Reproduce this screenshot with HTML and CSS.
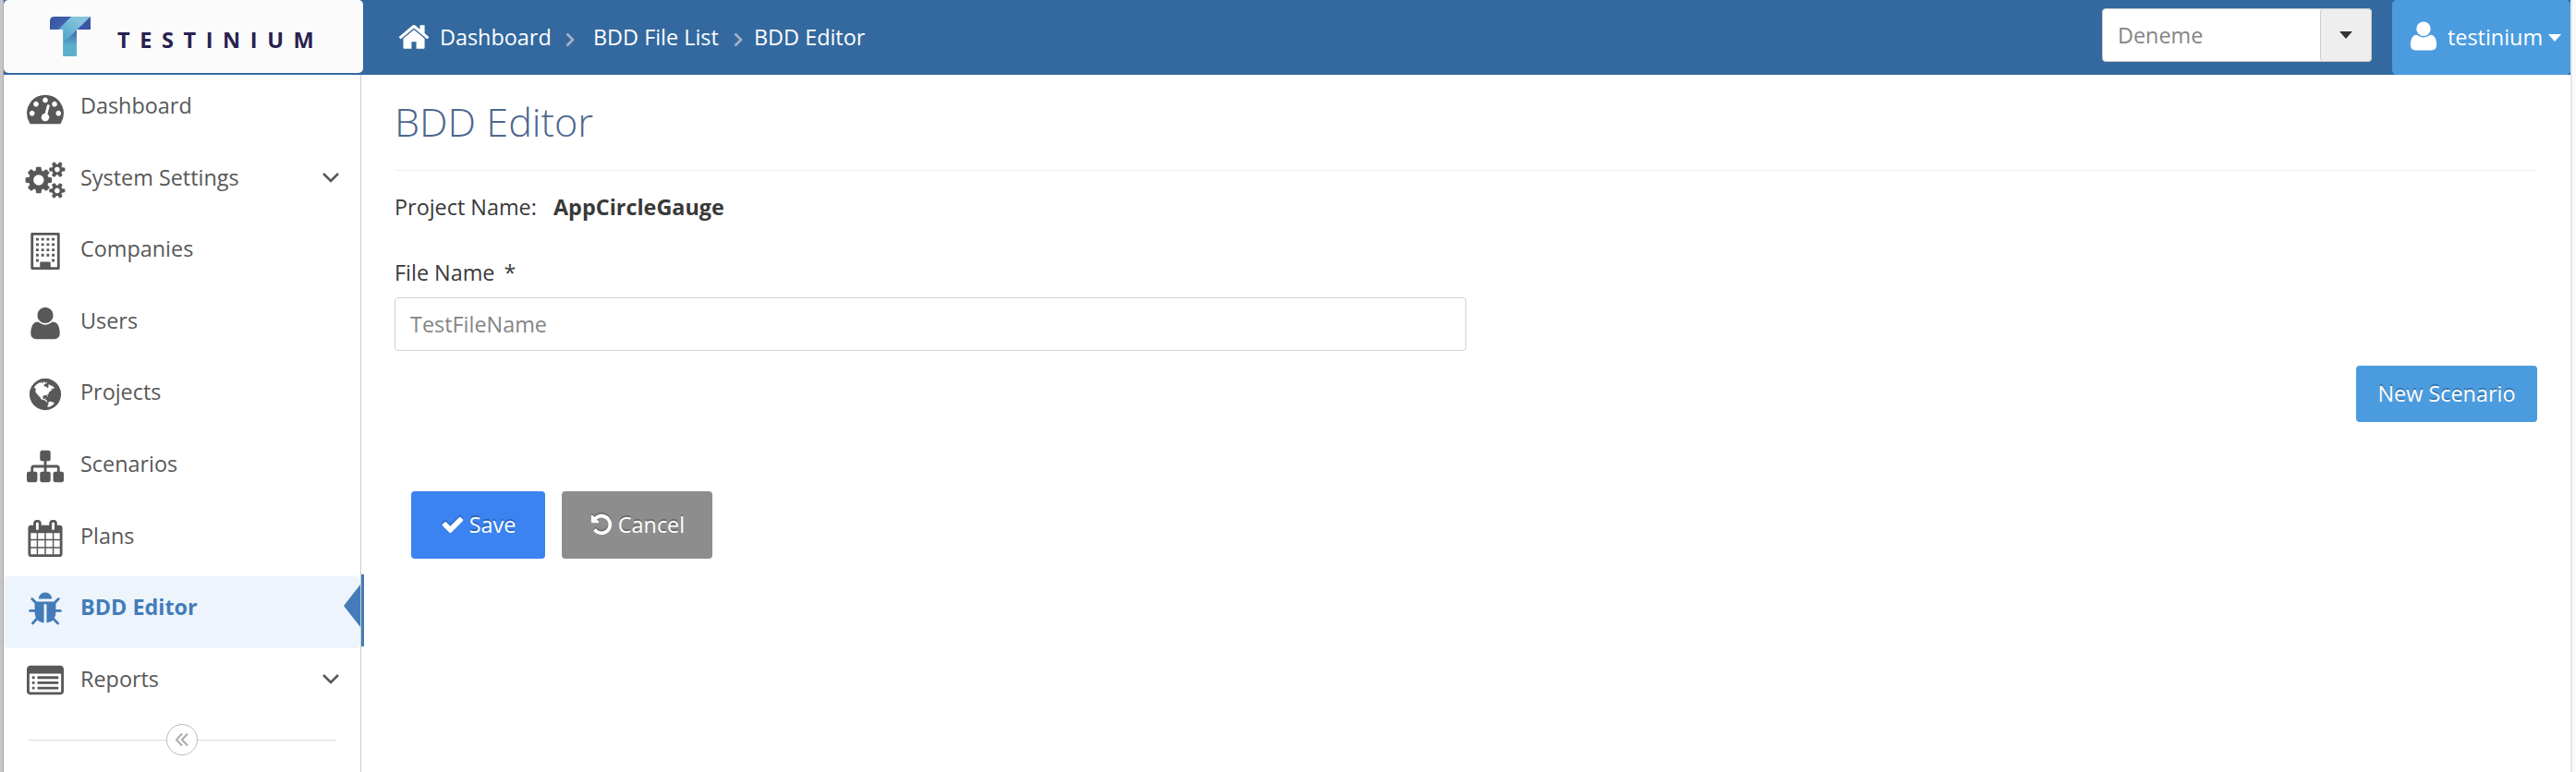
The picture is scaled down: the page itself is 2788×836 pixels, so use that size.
FILE: index.html
```html
<!DOCTYPE html>
<html lang="en">
<head>
<meta charset="utf-8">
<title>BDD Editor</title>
<link rel="stylesheet" href="styles.css">
</head>
<body>
<svg class="sprite" width="0" height="0" aria-hidden="true">
  <symbol id="i-dashboard" viewBox="0 0 1792 1792"><path d="M384 1152q0-53-37.5-90.5t-90.5-37.5-90.5 37.5-37.5 90.5 37.5 90.5 90.5 37.5 90.5-37.5 37.5-90.5zm192-448q0-53-37.5-90.5t-90.5-37.5-90.5 37.5-37.5 90.5 37.5 90.5 90.5 37.5 90.5-37.5 37.5-90.5zm428 481l101-382q6-26-7.5-48.5t-38.5-29.5-48 6.5-30 39.5l-101 382q-60 5-107 43.5t-63 98.5q-20 77 20 146t117 89 146-20 89-117q16-60-6-117t-72-91zm660-33q0-53-37.5-90.5t-90.5-37.5-90.5 37.5-37.5 90.5 37.5 90.5 90.5 37.5 90.5-37.5 37.5-90.5zm-640-640q0-53-37.5-90.5t-90.5-37.5-90.5 37.5-37.5 90.5 37.5 90.5 90.5 37.5 90.5-37.5 37.5-90.5zm448 192q0-53-37.5-90.5t-90.5-37.5-90.5 37.5-37.5 90.5 37.5 90.5 90.5 37.5 90.5-37.5 37.5-90.5zm320 448q0 261-141 483-19 29-54 29h-1402q-35 0-54-29-141-221-141-483 0-182 71-348t191-286 286-191 348-71 348 71 286 191 191 286 71 348z"/></symbol>
  <symbol id="i-cogs" viewBox="0 0 1792 1792" overflow="visible"><path d="M832 896q0-106-75-181t-181-75-181 75-75 181 75 181 181 75 181-75 75-181zm768 512q0-52-38-90t-90-38-90 38-38 90q0 53 37.5 90.5t90.5 37.5 90.5-37.5 37.5-90.5zm0-1024q0-52-38-90t-90-38-90 38-38 90q0 53 37.5 90.5t90.5 37.5 90.5-37.5 37.5-90.5zm-384 421v185q0 10-7 19.5t-16 10.5l-155 24q-11 35-32 76 34 48 90 115 7 11 7 20 0 12-7 19-23 30-82.5 89.5t-78.5 59.5q-11 0-21-7l-115-90q-37 19-77 31-11 108-23 155-7 24-30 24h-186q-11 0-20-7.5t-10-17.5l-23-153q-34-10-75-31l-118 89q-7 7-20 7-11 0-21-8-144-133-144-160 0-9 7-19 10-14 41-53t47-61q-23-44-35-82l-152-24q-10-1-17-9.5t-7-19.5v-185q0-10 7-19.5t16-10.5l155-24q11-35 32-76-34-48-90-115-7-11-7-20 0-12 7-20 22-30 82-89t79-59q11 0 21 7l115 90q34-18 77-32 11-108 23-154 7-24 30-24h186q11 0 20 7.5t10 17.5l23 153q34 10 75 31l118-89q8-7 20-7 11 0 21 8 144 133 144 160 0 8-7 19-12 16-42 54t-45 60q23 48 34 82l152 23q10 2 17 10.5t7 19.5zm640 533v140q0 16-149 31-12 27-30 52 51 113 51 138 0 4-4 7-122 71-124 71-8 0-46-47t-52-68q-20 2-30 2t-30-2q-14 21-52 68t-46 47q-2 0-124-71-4-3-4-7 0-25 51-138-18-25-30-52-149-15-149-31v-140q0-16 149-31 13-29 30-52-51-113-51-138 0-4 4-7 4-2 35-20t59-34 30-16q8 0 46 46.5t52 67.5q20-2 30-2t30 2q51-71 92-112l6-2q4 0 124 70 4 3 4 7 0 25-51 138 17 23 30 52 149 15 149 31zm0-1024v140q0 16-149 31-12 27-30 52 51 113 51 138 0 4-4 7-122 71-124 71-8 0-46-47t-52-68q-20 2-30 2t-30-2q-14 21-52 68t-46 47q-2 0-124-71-4-3-4-7 0-25 51-138-18-25-30-52-149-15-149-31v-140q0-16 149-31 13-29 30-52-51-113-51-138 0-4 4-7 4-2 35-20t59-34 30-16q8 0 46 46.5t52 67.5q20-2 30-2t30 2q51-71 92-112l6-2q4 0 124 70 4 3 4 7 0 25-51 138 17 23 30 52 149 15 149 31z"/></symbol>
  <symbol id="i-building" viewBox="0 0 1792 1792">
    <path fill-rule="evenodd" d="M256 0h1280q64 0 64 64v1664q0 64-64 64h-1280q-64 0-64-64v-1664q0-64 64-64zM320 128v1536h320v-224q0-32 32-32h448q32 0 32 32v224h320v-1536z"/>
    <path d="M448 256h128v128h-128zm256 0h128v128h-128zm256 0h128v128h-128zm256 0h128v128h-128zM448 512h128v128h-128zm256 0h128v128h-128zm256 0h128v128h-128zm256 0h128v128h-128zM448 768h128v128h-128zm256 0h128v128h-128zm256 0h128v128h-128zm256 0h128v128h-128zM448 1024h128v128h-128zm256 0h128v128h-128zm256 0h128v128h-128zm256 0h128v128h-128zM448 1280h128v128h-128zm768 0h128v128h-128z"/>
  </symbol>
  <symbol id="i-user" viewBox="0 0 1792 1792"><path d="M1600 1405q0 120-73 189.5t-194 69.5h-874q-121 0-194-69.5t-73-189.5q0-53 3.5-103.5t14-109 26.5-108.5 43-97.5 62-81 85.5-53.5 111.5-20q9 0 42 21.5t74.5 48 108 48 133.5 21.5 133.5-21.5 108-48 74.5-48 42-21.5q61 0 111.5 20t85.5 53.5 62 81 43 97.5 26.5 108.5 14 109 3.5 103.5zm-320-893q0 159-112.5 271.5t-271.5 112.5-271.5-112.5-112.5-271.5 112.5-271.5 271.5-112.5 271.5 112.5 112.5 271.5z"/></symbol>
  <symbol id="i-globe" viewBox="0 0 1792 1792"><path d="M896 128q209 0 385.5 103t279.5 279.5 103 385.5-103 385.5-279.5 279.5-385.5 103-385.5-103-279.5-279.5-103-385.5 103-385.5 279.5-279.5 385.5-103zm274 521q-2 1-9.5 9.5t-13.5 9.5q2 0 4.5-5t5-11 3.5-7q6-7 22-15 14-6 52-12 34-8 51 11-2-2 9.5-13t14.5-12q3-2 15-4.5t15-7.5l2-22q-12 1-17.5-7t-6.5-21q0 2-6 8 0-7-4.5-8t-11.5 1-9 1q-10-3-15-7.5t-8-16.5-4-15q-2-5-9.5-11t-9.5-10q-1-2-2.5-5.5t-3-6.5-4-5.5-5.5-2.5-7 5-7.5 10-4.5 5q-3-2-6-1.5t-4.5 1-4.5 3-5 3.5q-3 2-8.5 3t-8.5 2q15-5-1-11-10-4-16-3 9-4 7.5-12t-8.5-14h5q-1-4-8.5-8.5t-17.5-8.5-13-6q-8-5-34-9.5t-33-.5q-5 6-4.5 10.5t4 14 3.5 12.5q1 6-5.5 13t-6.5 12q0 7 14 15.5t10 21.5q-3 8-16 16t-16 12q-5 8-1.5 18.5t10.5 16.5q2 2 1.5 4t-3.5 4.5-5.5 4-6.5 3.5l-3 2q-11 5-20.5-6t-13.5-26q-7-25-16-30-23-8-29 1-5-13-41-26-25-9-58-4 6-1 0-15-7-15-19-12 3-6 4-17.5t1-13.5q3-13 12-23 1-1 7-8.5t9.5-13.5.5-6q35 4 50-11 5-5 11.5-17t10.5-17q9-6 14-5.5t14.5 5.5 14.5 5q14 1 15.5-11t-7.5-20q12 1 3-17-5-7-8-9-12-4-27 5-8 4 2 8-1-1-9.5 10.5t-16.5 17.5-16-5q-1-1-5.5-13.5t-9.5-13.5q-8 0-16 15 3-8-11-15t-24-8q19-12-8-27-7-4-20.5-5t-19.5 4q-5 7-5.5 11.5t5 8 10.5 5.5 11.5 4 8.5 3q14 10 8 14-2 1-8.5 3.5t-11.5 4.5-6 4q-3 4 0 14t-2 14q-5-5-9-17.5t-7-16.5q7 9-25 6l-10-1q-4 0-16 2t-20.5 1-13.5-8q-4-8 0-20 1-4 4-2-4-3-11-9.5t-10-8.5q-46 15-94 41 6 1 12-1 5-2 13-6.5t10-5.5q34-14 42-7l5-5q14 16 20 25-7-4-30-1-20 6-22 12 7 12 5 18-4-3-11.5-10t-14.5-11-15-5q-16 0-22 1-146 80-235 222 7 7 12 8 4 1 5 9t2.5 11 11.5-3q9 8 3 19 1-1 44 27 19 17 21 21 3 11-10 18-1-2-9-9t-9-4q-3 5 .5 18.5t10.5 12.5q-7 0-9.5 16t-2.5 35.5-1 23.5l2 1q-3 12 5.5 34.5t21.5 19.5q-13 3 20 43 6 8 8 9 3 2 12 7.5t15 10 10 10.5q4 5 10 22.5t14 23.5q-2 6 9.5 20t10.5 23q-1 0-2.5 1t-2.5 1q3 7 15.5 14t15.5 13q1 3 2 10t3 11 8 2q2-20-24-62-15-25-17-29-3-5-5.5-15.5t-4.5-14.5q2 0 6 1.5t8.5 3.5 7.5 4 2 3q-3 7 2 17.5t12 18.5 17 19 12 13q6 6 14 19.5t0 13.5q9 0 20 10.5t17 19.5q5 8 8 26t5 24q2 7 8.5 13.5t12.5 9.5l16 8 13 7q5 2 18.5 10.5t21.5 11.5q10 4 16 4t14.5-2.5 13.5-3.5q15-2 29 15t21 21q36 19 55 11-2 1 .5 7.5t8 15.5 9 14.5 5.5 8.5q5 6 18 15t18 15q6-4 7-9-3 8 7 20t18 10q14-3 14-32-31 15-49-18 0-1-2.5-5.5t-4-8.5-2.5-8.5 0-7.5 5-3q9 0 10-3.5t-2-12.5-4-13q-1-8-11-20t-12-15q-5 9-16 8t-16-9q0 1-1.5 5.5t-1.5 6.5q-13 0-15-1 1-3 2.5-17.5t3.5-22.5q1-4 5.5-12t7.5-14.5 4-12.5-4.5-9.5-17.5-2.5q-19 1-26 20-1 3-3 10.5t-5 11.5-9 7q-7 3-24 2t-24-5q-13-8-22.5-29t-9.5-37q0-10 2.5-26.5t3-25-5.5-24.5q3-2 9-9.5t10-10.5q2-1 4.5-1.5t4.5 0 4-1.5 3-6q-1-1-4-3-3-3-4-3 7 3 28.5-1.5t27.5 1.5q15 11 22-2 0-1-2.5-9.5t-.5-13.5q5 27 29 9 3 3 15.5 5t17.5 5q3 2 7 5.5t5.5 4.5 5-.5 8.5-6.5q10 14 12 24 11 40 19 44 7 3 11 2t4.5-9.5 0-14-1.5-12.5l-1-8v-18l-1-8q-15-3-18.5-12t1.5-18.5 15-18.5q1-1 8-3.5t15.5-6.5 12.5-8q21-19 15-35 7 0 11-9-1 0-5-3t-7.5-5-4.5-2q9-5 2-16 5-3 7.5-11t7.5-10q9 12 21 2 8-8 1-16 5-7 20.5-10.5t18.5-9.5q7 2 8-2t1-12 3-12q4-5 15-9t13-5l17-11q3-4 0-4 18 2 31-11 10-11-6-20 3-6-3-9.5t-15-5.5q3-1 11.5-.5t10.5-1.5q15-10-7-16-17-5-43 12zm-163 877q206-36 351-189-3-3-12.5-4.5t-12.5-3.5q-18-7-24-8 1-7-2.5-13t-8-9-12.5-8-11-7q-2-2-7-6t-7-5.5-7.5-4.5-8.5-2-10 1l-3 1q-3 1-5.5 2.5t-5.5 3-4 3 0 2.5q-21-17-36-22-5-1-11-5.5t-10.5-7-10-1.5-11.5 7q-5 5-6 15t-2 13q-7-5 0-17.5t2-18.5q-3-6-10.5-4.5t-12 4.5-11.5 8.5-9 6.5-8.5 5.5-8.5 7.5q-3 4-6 12t-5 11q-2-4-11.5-6.5t-9.5-5.5q2 10 4 35t5 38q7 31-12 48-27 25-29 40-4 22 12 26 0 7-8 20.5t-7 21.5q0 6 2 16z"/></symbol>
  <symbol id="i-sitemap" viewBox="0 0 1792 1792"><path d="M1792 1248v320q0 40-28 68t-68 28h-320q-40 0-68-28t-28-68v-320q0-40 28-68t68-28h96v-192h-512v192h96q40 0 68 28t28 68v320q0 40-28 68t-68 28h-320q-40 0-68-28t-28-68v-320q0-40 28-68t68-28h96v-192h-512v192h96q40 0 68 28t28 68v320q0 40-28 68t-68 28h-320q-40 0-68-28t-28-68v-320q0-40 28-68t68-28h96v-192q0-52 38-90t90-38h512v-192h-96q-40 0-68-28t-28-68v-320q0-40 28-68t68-28h320q40 0 68 28t28 68v320q0 40-28 68t-68 28h-96v192h512q52 0 90 38t38 90v192h96q40 0 68 28t28 68z"/></symbol>
  <symbol id="i-calendar" viewBox="0 0 1792 1792"><path d="M192 1664h288v-288h-288v288zm352 0h320v-288h-320v288zm-352-352h288v-320h-288v320zm352 0h320v-320h-320v320zm-352-384h288v-288h-288v288zm736 736h320v-288h-320v288zm-384-736h320v-288h-320v288zm768 736h288v-288h-288v288zm-384-352h320v-320h-320v320zm-352-864v-288q0-13-9.500-22.500t-22.500-9.500h-64q-13 0-22.500 9.500t-9.500 22.500v288q0 13 9.500 22.500t22.500 9.500h64q13 0 22.500-9.500t9.500-22.500zm736 864h288v-320h-288v320zm-384-384h320v-288h-320v288zm384 0h288v-288h-288v288zm32-480v-288q0-13-9.500-22.500t-22.500-9.500h-64q-13 0-22.500 9.500t-9.500 22.500v288q0 13 9.500 22.500t22.500 9.500h64q13 0 22.500-9.500t9.500-22.500zm384-64v1280q0 52-38 90t-90 38h-1408q-52 0-90-38t-38-90v-1280q0-52 38-90t90-38h128v-96q0-66 47-113t113-47h64q66 0 113 47t47 113v96h384v-96q0-66 47-113t113-47h64q66 0 113 47t47 113v96h128q52 0 90 38t38 90z"/></symbol>
  <symbol id="i-bug" viewBox="0 0 1792 1792"><path d="M1696 960q0 26-19 45t-45 19h-224q0 171-67 290l208 209q19 19 19 45t-19 45q-18 19-45 19t-45-19l-198-197q-5 5-15 13t-42 28.500-65 36.500-82 29-97 13v-896h-128v896q-51 0-101.500-13.500t-87-33-66-39-43.500-32.500l-15-14-183 207q-20 21-48 21-24 0-43-16-19-18-20.500-44.500t15.500-46.500l202-227q-58-114-58-274h-224q-26 0-45-19t-19-45 19-45 45-19h224v-294l-173-173q-19-19-19-45t19-45 45-19 45 19l173 173h844l173-173q19-19 45-19t45 19 19 45-19 45l-173 173v294h224q26 0 45 19t19 45zm-480-576h-640q0-133 93.500-226.500t226.500-93.500 226.500 93.500 93.500 226.500z"/></symbol>
  <symbol id="i-list" viewBox="0 0 1792 1792">
    <path fill-rule="evenodd" d="M160 128h1472q66 0 113 47t47 113v1088q0 66-47 113t-113 47h-1472q-66 0-113-47t-47-113v-1088q0-66 47-113t113-47zM160 512q-32 0-32 32v832q0 32 32 32h1472q32 0 32-32v-832q0-32-32-32z"/>
    <path d="M288 640h64q32 0 32 32v64q0 32-32 32h-64q-32 0-32-32v-64q0-32 32-32zm0 256h64q32 0 32 32v64q0 32-32 32h-64q-32 0-32-32v-64q0-32 32-32zm0 256h64q32 0 32 32v64q0 32-32 32h-64q-32 0-32-32v-64q0-32 32-32zM544 640h960q32 0 32 32v64q0 32-32 32h-960q-32 0-32-32v-64q0-32 32-32zm0 256h960q32 0 32 32v64q0 32-32 32h-960q-32 0-32-32v-64q0-32 32-32zm0 256h960q32 0 32 32v64q0 32-32 32h-960q-32 0-32-32v-64q0-32 32-32z"/>
  </symbol>
  <symbol id="i-home" viewBox="0 0 1792 1792"><path d="M1472 992v480q0 26-19 45t-45 19h-384v-384h-256v384h-384q-26 0-45-19t-19-45v-480q0-1 .5-3t.5-3l575-474 575 474q1 2 1 6zm223-69l-62 74q-8 9-21 11h-3q-13 0-21-7l-692-577-692 577q-12 8-24 7-13-2-21-11l-62-74q-8-10-7-23.500t11-21.500l719-599q32-26 76-26t76 26l244 204v-195q0-14 9-23t23-9h192q14 0 23 9t9 23v408l219 182q10 8 11 21.500t-7 23.500z"/></symbol>
  <symbol id="i-check" viewBox="0 0 1792 1792"><path d="M1671 566q0 40-28 68l-724 724-136 136q-28 28-68 28t-68-28l-136-136-362-362q-28-28-28-68t28-68l136-136q28-28 68-28t68 28l294 295 656-657q28-28 68-28t68 28l136 136q28 28 28 68z"/></symbol>
  <symbol id="i-undo" viewBox="0 0 1792 1792"><path d="M1664 896q0 156-61 298t-164 245-245 164-298 61q-172 0-327-72.500t-264-204.500q-7-10-6.500-22.500t8.500-20.500l137-138q10-9 25-9 16 2 23 12 73 95 179 147t225 52q104 0 198.500-40.500t163.500-109.500 109.500-163.500 40.500-198.500-40.500-198.500-109.500-163.500-163.500-109.500-198.500-40.500q-98 0-188 35.500t-160 101.500l137 138q31 30 14 69-17 40-59 40h-448q-26 0-45-19t-19-45v-448q0-42 40-59 39-17 69 14l130 129q107-101 244.500-156.500t284.500-55.500q156 0 298 61t245 164 164 245 61 298z"/></symbol>
</svg>

<div class="app">
  <header class="topbar">
    <a class="brand">
      <svg class="brand-mark" viewBox="0 0 44 43">
        <defs>
          <clipPath id="tee"><path d="M0 14V5Q0 0 5 0H44V14H29V43H14.500V14Z"/></clipPath>
          <linearGradient id="tl" x1="0" y1="0" x2="1" y2="1"><stop offset="0" stop-color="#3954a3"/><stop offset="1" stop-color="#4a86bd"/></linearGradient>
          <linearGradient id="band" gradientUnits="userSpaceOnUse" x1="30" y1="4" x2="16" y2="24"><stop offset="0" stop-color="#86c4dc"/><stop offset="1" stop-color="#4fa5cb"/></linearGradient>
          <linearGradient id="stem" x1="0" y1="0" x2="0" y2="1"><stop offset="0" stop-color="#3c62ab"/><stop offset=".6" stop-color="#5db0cd"/></linearGradient>
        </defs>
        <g clip-path="url(#tee)">
          <rect width="44" height="43" fill="url(#tl)"/>
          <path d="M29 14 14 29V43H30Z" fill="url(#stem)"/>
          <path d="M44 0V14H29Z" fill="#3b55a4"/>
          <path d="M23 0H44L14 29V14H9Z" fill="url(#band)"/>
        </g>
      </svg>
      <span class="brand-name">TESTINIUM</span>
    </a>
    <nav class="crumbs">
      <svg class="icon icon-home"><use href="#i-home"/></svg>
      <a class="crumb-root">Dashboard</a>
      <svg class="sep" viewBox="0 0 10 16"><path d="M1.500 1.500 8 8l-6.500 6.500"/></svg>
      <a class="crumb-list">BDD File List</a>
      <svg class="sep" viewBox="0 0 10 16"><path d="M1.500 1.500 8 8l-6.500 6.500"/></svg>
      <span class="crumb-page">BDD Editor</span>
    </nav>
    <div class="combo">
      <span class="combo-value">Deneme</span>
      <span class="combo-toggle"><i class="caret"></i></span>
    </div>
    <a class="account">
      <svg class="icon"><use href="#i-user"/></svg>
      <span class="account-name">testinium</span>
      <i class="caret"></i>
    </a>
  </header>

  <div class="body">
    <aside class="sidebar">
      <a class="item"><svg class="icon"><use href="#i-dashboard"/></svg><span>Dashboard</span></a>
      <a class="item"><svg class="icon"><use href="#i-cogs"/></svg><span>System Settings</span><svg class="chev" viewBox="0 0 18 11"><path d="M1 1l8 8 8-8"/></svg></a>
      <a class="item"><svg class="icon"><use href="#i-building"/></svg><span>Companies</span></a>
      <a class="item"><svg class="icon"><use href="#i-user"/></svg><span>Users</span></a>
      <a class="item"><svg class="icon"><use href="#i-globe"/></svg><span>Projects</span></a>
      <a class="item"><svg class="icon"><use href="#i-sitemap"/></svg><span>Scenarios</span></a>
      <a class="item"><svg class="icon"><use href="#i-calendar"/></svg><span>Plans</span></a>
      <a class="item active"><svg class="icon"><use href="#i-bug"/></svg><span>BDD Editor</span></a>
      <a class="item"><svg class="icon"><use href="#i-list"/></svg><span>Reports</span><svg class="chev" viewBox="0 0 18 11"><path d="M1 1l8 8 8-8"/></svg></a>
      <div class="collapse">
        <span class="rule"></span>
        <span class="collapse-btn"><svg viewBox="0 0 14 14"><path d="M7 .5.800 7 7 13.500M13 .5 6.800 7l6.200 6.500"/></svg></span>
        <span class="rule"></span>
      </div>
    </aside>

    <main class="content">
      <h1>BDD Editor</h1>
      <p class="project">Project Name: <b>AppCircleGauge</b></p>
      <label class="field-label">File Name <span>*</span></label>
      <div class="field">TestFileName</div>
      <div class="toolbar"><button class="btn btn-new">New Scenario</button></div>
      <div class="actions">
        <button class="btn btn-save"><svg class="icon"><use href="#i-check"/></svg>Save</button>
        <button class="btn btn-cancel"><svg class="icon"><use href="#i-undo"/></svg>Cancel</button>
      </div>
    </main>
  </div>
</div>
</body>
</html>
```
FILE: styles.css
```css
* { box-sizing: border-box; }

body {
  margin: 0;
  height: 836px;
  padding: 0 4px 0 3px;
  display: flex;
  background: linear-gradient(to right, #c6c6c6 3px, #fafafa 3px);
  color: #393939;
  font: 23.4px/32px "Open Sans", "Noto Sans", sans-serif;
  overflow: hidden;
}

.sprite { position: absolute; }

.app {
  flex: 1;
  display: flex;
  flex-direction: column;
  border-left: 1px solid #a8a8a8;
  border-right: 2px solid #e6e6e6;
  background: #fff;
}

.icon {
  width: 36px;
  height: 36px;
  flex: none;
  fill: currentColor;
  overflow: visible;
}

/* Top bar */
.topbar {
  display: flex;
  height: 81px;
  background: #33699f;
  color: #fff;
}

.brand {
  display: flex;
  width: 389px;
  height: 79px;
  padding: 18px 0 0 50px;
  border-radius: 5px;
  background: #fbfbfb;
}

.brand-mark { width: 44px; height: 43px; }

.brand-name {
  margin: 9px 0 0 29px;
  color: #28214f;
  font-weight: 700;
  font-size: 23.500px;
  letter-spacing: 10.600px;
}

.crumbs {
  flex: 1;
  display: flex;
  align-items: flex-start;
  padding: 24px 0 0 37px;
}

.icon-home { margin-top: -2px; }
.crumb-root { width: 136px; margin-left: 10px; }
.crumb-list { width: 152px; margin-left: 20px; }
.crumb-page { margin-left: 12px; }

.sep {
  width: 10px;
  height: 16px;
  margin-top: 11px;
  fill: none;
  stroke: #a9b1c4;
  stroke-width: 2.600;
}

.combo {
  display: flex;
  width: 292px;
  height: 58px;
  margin: 9px 22px 0 0;
  border: 1px solid #ccc;
  border-radius: 4px;
  background: #fff;
  color: #858585;
}

.combo-value { flex: 1; padding: 12px 0 0 16px; }

.combo-toggle {
  width: 56px;
  margin: -1px;
  display: flex;
  justify-content: center;
  padding-top: 24px;
  border: 1px solid #ccc;
  border-radius: 4px;
  background: #eee;
  color: #333;
}

.caret {
  width: 0;
  height: 0;
  border: 7px solid transparent;
  border-top: 8px solid currentColor;
  border-bottom: 0;
}

.account {
  display: flex;
  width: 193px;
  padding: 24px 0 0 16px;
  border-radius: 5px;
  background: #4b9cdf;
}

.account .icon { margin-top: -3px; }
.account-name { width: 109px; margin-left: 8px; }
.account .caret { margin-top: 13px; }

/* Sidebar */
.body { flex: 1; display: flex; min-height: 0; }

.sidebar {
  width: 387px;
  border-right: 1px solid #ccc;
  color: #585858;
}

.item {
  position: relative;
  display: flex;
  height: 77.600px;
  padding: 16px 23px 0 25px;
}

.item .icon { width: 40px; height: 40px; }
.item span { flex: 1; margin: 1px 0 0 18px; }

.chev {
  width: 18px;
  height: 11px;
  margin-top: 12px;
  fill: none;
  stroke: #585858;
  stroke-width: 2.600;
  overflow: visible;
}

.item.active {
  border-radius: 5px;
  background: #edf4fb;
  color: #437cb8;
  font-weight: 700;
}

.item.active::before {
  content: "";
  position: absolute;
  right: 0;
  top: 9px;
  border: 23px solid transparent;
  border-left: 0;
  border-right: 18px solid #437cb8;
}

.item.active::after {
  content: "";
  position: absolute;
  right: -4px;
  top: -2px;
  width: 3px;
  height: 78px;
  background: #437cb8;
}

.collapse {
  display: flex;
  align-items: center;
  padding: 5px 27px 0;
}

.rule { flex: 1; height: 1px; background: #ddd; }

.collapse-btn {
  width: 34px;
  height: 34px;
  display: flex;
  align-items: center;
  justify-content: center;
  border: 1px solid #bbb;
  border-radius: 50%;
}

.collapse-btn svg {
  width: 14px;
  height: 14px;
  fill: none;
  stroke: #aaa;
  stroke-width: 2;
}

/* Content */
.content {
  flex: 1;
  padding: 20px 36px 0;
}

h1 {
  margin: 0;
  height: 84px;
  border-bottom: 1px solid #eee;
  color: #4c678f;
  font-size: 43.200px;
  font-weight: 300;
  line-height: 62px;
}

.project { margin: 23px 0 0; }
.project b { margin-left: 12px; }

.field-label { display: block; margin-top: 39px; }
.field-label span { margin-left: 4px; }

.field {
  width: 1160px;
  height: 58px;
  margin-top: 11px;
  padding: 12px 16px 0;
  border: 1px solid #d2d2d2;
  border-radius: 4px;
  color: #858585;
}

.toolbar { display: flex; justify-content: flex-end; margin-top: 16px; }

.btn {
  display: flex;
  align-items: center;
  justify-content: center;
  padding: 0 0 2px;
  border: 0;
  border-radius: 4px;
  color: #fff;
  font: inherit;
  text-shadow: 0 -2px 0 rgba(0, 0, 0, .25);
}

.btn .icon {
  width: 26px;
  height: 26px;
  margin-right: 5px;
  filter: drop-shadow(0 -2px 0 rgba(0, 0, 0, .2));
}

.btn-new { width: 196px; height: 61px; background: #4b9cdf; }

.actions { display: flex; gap: 18px; margin: 75px 0 0 18px; }
.btn-save { width: 145px; height: 73px; background: #3a83f1; }
.btn-cancel { width: 163px; height: 73px; background: #8d8d8d; }
```
